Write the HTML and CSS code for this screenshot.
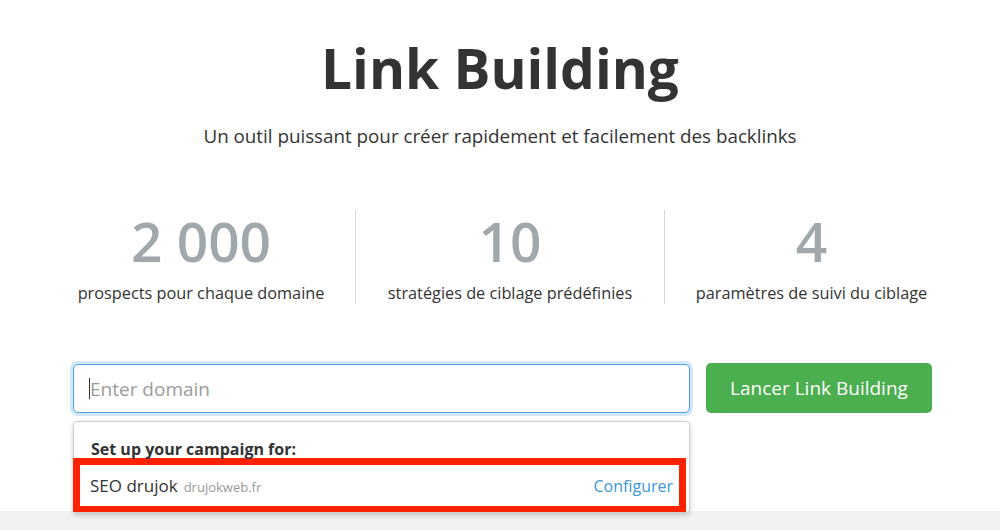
FILE: index.html
```html
<!DOCTYPE html>
<html lang="fr">
<head>
  <meta charset="UTF-8" />
  <meta name="viewport" content="width=device-width, initial-scale=1.0"/>
  <title>Link Building</title>
  <link rel="stylesheet" href="styles.css">
</head>
<body>

  <!-- Intro -->
  <div class="hero">
    <h1>Link Building</h1>
    <p class="lead">Un outil puissant pour créer rapidement et facilement des backlinks</p>

    <!-- Key numbers -->
    <div class="stats">
      <div class="stat">
        <div class="stat-num">2 000</div>
        <div class="stat-label">prospects pour chaque domaine</div>
      </div>
      <div class="stat">
        <div class="stat-num">10</div>
        <div class="stat-label">stratégies de ciblage prédéfinies</div>
      </div>
      <div class="stat">
        <div class="stat-num">4</div>
        <div class="stat-label">paramètres de suivi du ciblage</div>
      </div>
    </div>

    <!-- Domain search -->
    <form class="search" onsubmit="return false">
      <div class="field">
        <input type="text" class="focused" placeholder="Enter domain">
        <span class="caret"></span>

        <div class="dropdown">
          <div class="dropdown-title">Set up your campaign for:</div>
          <div class="project">
            <span class="project-name">SEO drujok</span>
            <span class="project-domain">drujokweb.fr</span>
            <a href="#" class="project-link">Configurer</a>
          </div>
        </div>
      </div>
      <button type="submit">Lancer Link Building</button>
    </form>
  </div>

  <div class="band"></div>

</body>
</html>
```

FILE: styles.css
```css
body {
  margin: 0;
  font-family: "Open Sans", Arial, sans-serif;
  color: #333;
  background: #fff;
}

.hero {
  height: 511px;
  padding-top: 36px;
  box-sizing: border-box;
  text-align: center;
}

h1 {
  margin: 0;
  font-size: 55px;
  line-height: 64px;
  font-weight: 700;
  color: #333;
}

.lead {
  margin: 24px 0 0;
  font-size: 18.8px;
  line-height: 24px;
}

.stats {
  display: grid;
  grid-template-columns: 308px 309px 294px;
  margin: 62px 0 0 47px;
}

.stat {
  padding-top: 1px;
}

.stat + .stat {
  border-left: 1px solid #d6d6d6;
}

.stat-num {
  font-size: 55px;
  line-height: 60px;
  font-weight: 600;
  color: #a0a8ac;
}

.stat-label {
  margin-top: 11px;
  font-size: 16.3px;
  line-height: 22px;
}

.search {
  display: flex;
  gap: 16px;
  width: 859px;
  margin: 60px 0 0 73px;
}

.field {
  position: relative;
  width: 617px;
}

.field input {
  width: 100%;
  height: 49px;
  box-sizing: border-box;
  padding: 0 16px;
  border: 1px solid #c8c8c8;
  border-radius: 5px;
  font-family: "Open Sans", Arial, sans-serif;
  font-size: 19px;
  color: #333;
  outline: none;
}

.field input.focused {
  border-color: #4ba3e6;
  box-shadow: 0 0 0 3px rgba(75, 163, 230, 0.25);
}

.field input::placeholder {
  color: #9b9b9b;
}

.caret {
  position: absolute;
  left: 16px;
  top: 14px;
  width: 1px;
  height: 21px;
  background: #333;
}

button {
  width: 226px;
  height: 50px;
  margin-top: -1px;
  background-color: #4bae4f;
  border: none;
  border-radius: 5px;
  color: #fff;
  font-family: "Open Sans", Arial, sans-serif;
  font-size: 19px;
  cursor: pointer;
}

.dropdown {
  position: absolute;
  top: 57px;
  left: 0;
  width: 617px;
  box-sizing: border-box;
  background: #fff;
  border: 1px solid #cfcfcf;
  border-radius: 4px;
  box-shadow: 0 2px 5px rgba(0, 0, 0, 0.2);
  text-align: left;
}

.dropdown-title {
  padding: 17px 17px 0;
  font-size: 16px;
  line-height: 20px;
  font-weight: 700;
}

.project {
  display: flex;
  align-items: baseline;
  height: 54px;
  box-sizing: border-box;
  margin: -1px 3px 0 -1px;
  padding: 1px 6px 0 10px;
  border: 7px solid #ff2200;
  border-bottom-width: 6px;
  line-height: 40px;
}

.project-name {
  font-size: 17px;
}

.project-domain {
  margin-left: 6px;
  font-size: 13px;
  color: #999;
}

.project-link {
  margin-left: auto;
  font-size: 16px;
  color: #3b97d9;
  text-decoration: none;
}

.band {
  height: 19px;
  background: #eff1f3;
}
```
